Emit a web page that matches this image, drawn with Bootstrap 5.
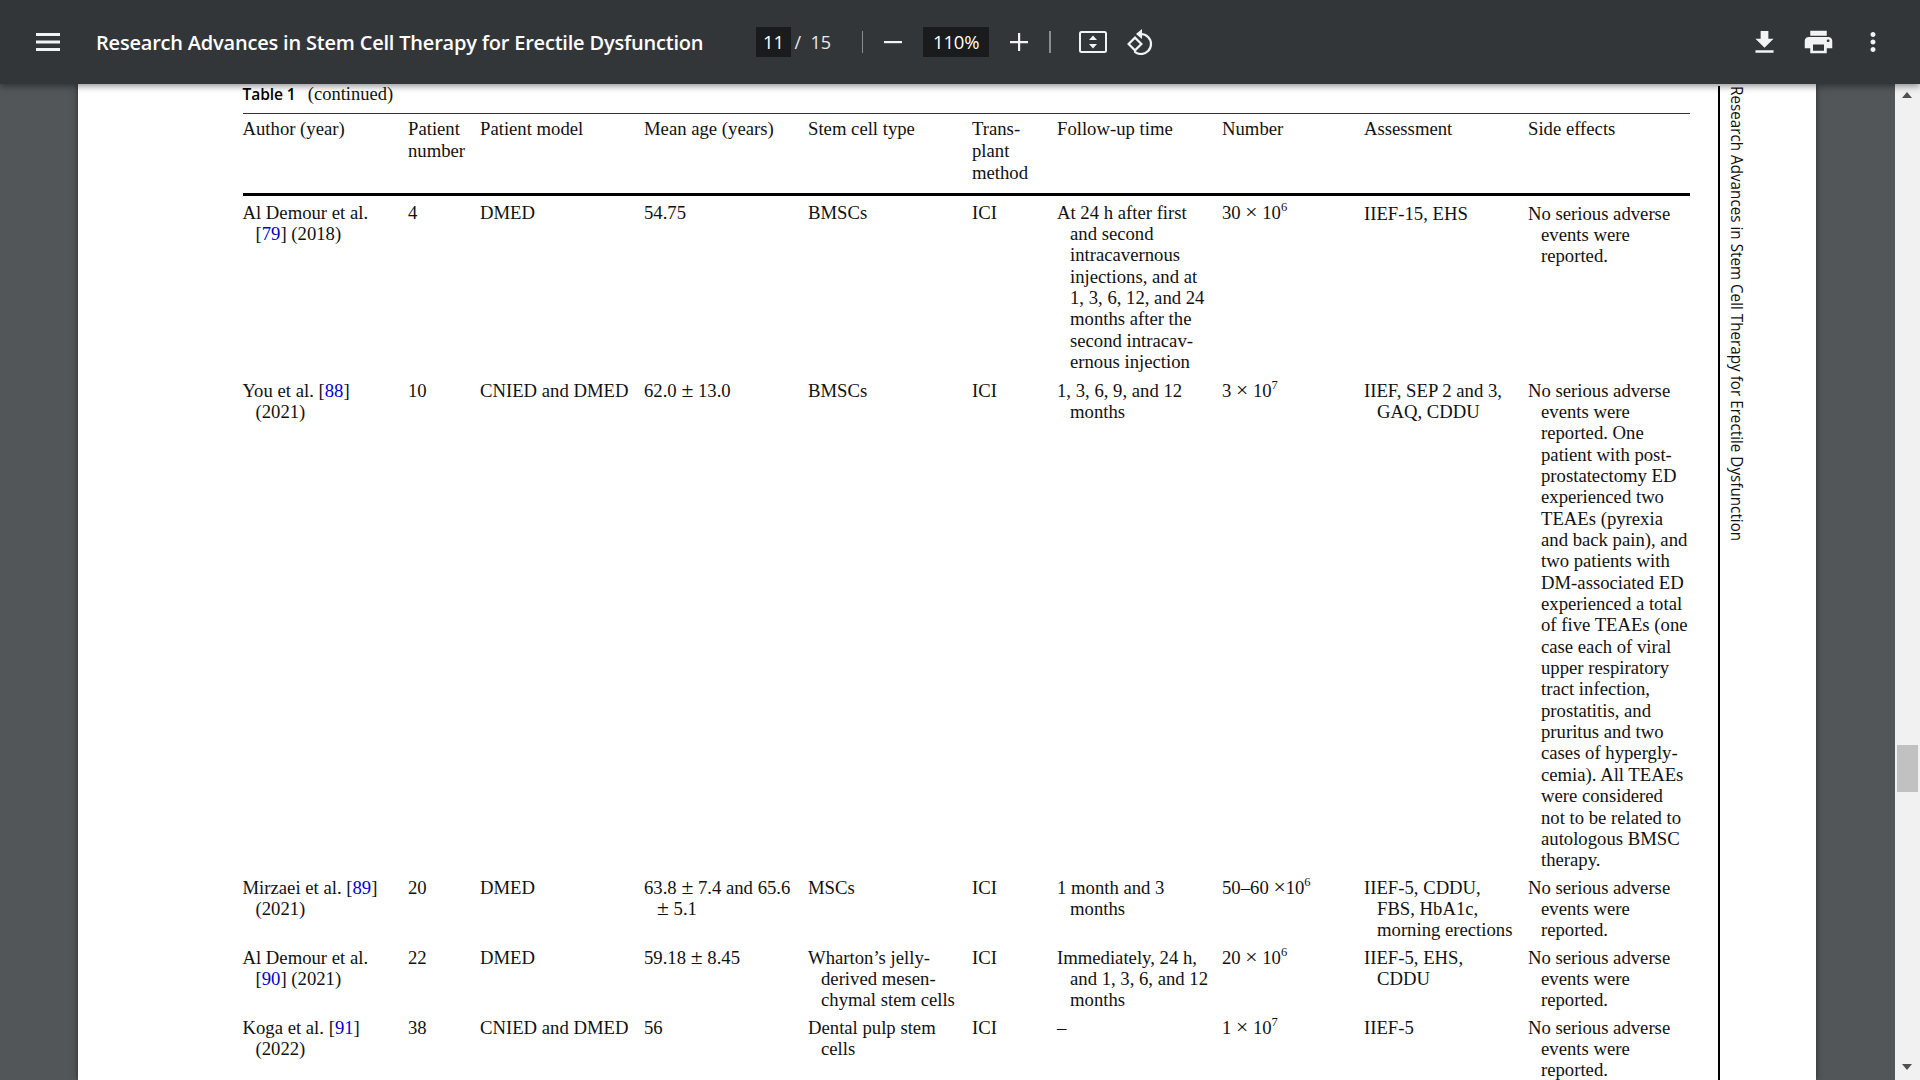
<!doctype html>
<html lang="en"><head><meta charset="utf-8"><title>PDF viewer</title>
<link rel="stylesheet" href="https://cdn.jsdelivr.net/npm/bootstrap@5.3.0/dist/css/bootstrap.min.css">
<style>
html,body{height:100%;overflow:hidden;background:#525659}
.shell{height:1080px}
.pdfbar{height:84px;background:#323639;color:#f1f3f4;position:relative;z-index:2;box-shadow:0 2px 7px rgba(0,0,0,.45);font-family:"Open Sans",sans-serif;flex:none}
.pdfbar svg{display:block;flex:none}
.menu-ico{margin-left:36px;width:24px;height:18px}
.doc-title{margin-left:36px;padding-top:2px;font-size:20px;font-weight:600;letter-spacing:-.2px;color:#fff;width:608px;white-space:nowrap}
.page-box{margin-left:52px;width:35px;height:30px;background:#191b1c;color:#fff;font-size:18.5px;line-height:30px;text-align:center}
.page-total{margin-left:3.5px;width:67.2px;font-size:18px;color:#e8eaed;white-space:nowrap}
.vsep{width:1.5px;height:22px;background:#8a8d90;flex:none}
.zoom-box{width:66px;height:30px;background:#191b1c;color:#fff;font-size:18.5px;letter-spacing:-.2px;line-height:30px;text-align:center}
.ml-a{margin-left:21px}.ml-b{margin-left:21px}.ml-c{margin-left:21px}.ml-d{margin-left:21px}.ml-e{margin-left:28px}.ml-f{margin-left:20px}
.right-tools{margin-left:auto;margin-right:32px}
.tool-print{margin-left:21.5px}.tool-more{margin-left:23.5px}
.viewer{min-height:0;background:#525659}
.sheet{margin-left:78px;width:1738px;background:#fff;box-shadow:0 0 6px rgba(0,0,0,.5);overflow:hidden;padding-left:164.5px}
.sheet-main{width:1447.5px;flex:none}
.tbl-cap{height:29px;font-family:"Liberation Serif",serif;font-size:18.5px;line-height:20px;color:#111}
.tbl-cap b{font-family:"Open Sans",sans-serif;font-size:15.6px;font-weight:600;margin-right:7.5px;letter-spacing:-.1px;color:#000}
.paper-table{table-layout:fixed;width:100%;border-collapse:collapse;font-family:"Liberation Serif",serif;font-size:18.7px;line-height:21.35px;color:#111}
.paper-table thead tr{border-top:1.5px solid #333;border-bottom:3px solid #000}
.paper-table th{font-weight:400;vertical-align:top;line-height:22px;padding:3.5px 0 9px}
.paper-table td{vertical-align:top;padding:5px 0 1px 13px;text-indent:-13px;white-space:nowrap}
.paper-table tbody tr.first td{padding-top:6.2px;padding-bottom:2.2px}
.paper-table sup{font-size:12.5px;top:-.6em;line-height:0;vertical-align:baseline;position:relative}
.mop{font-size:1.16em;line-height:0}
.ref{color:#0000d0}
.nudge{position:relative;top:1px}
.head-rule{margin-left:28px;margin-top:2px;border-left:2px solid #000;padding-left:8px;flex:none;width:90px;height:1000px}
.head-rule span{writing-mode:vertical-rl;font-family:"Open Sans",sans-serif;font-size:16.6px;line-height:19px;color:#111;white-space:nowrap;display:block;transform:scaleY(.918);transform-origin:top left}
.sbar{margin-left:auto;width:25px;background:#f1f1f1;position:relative;flex:none}
.sb-thumb{position:absolute;left:2px;right:2px;top:661px;height:47px;background:#c1c1c1}
.sb-up,.sb-down{position:absolute;left:7px;width:0;height:0;border-left:5.5px solid transparent;border-right:5.5px solid transparent}
.sb-up{top:8px;border-bottom:6px solid #505050}
.sb-down{bottom:10px;border-top:6px solid #505050}
</style></head>
<body>
<div class="shell d-flex flex-column">
  <div class="pdfbar d-flex align-items-center">
    <svg class="menu-ico" viewBox="0 0 24 18"><path fill="#f1f3f4" d="M0 0h24v3H0zM0 7.5h24v3H0zM0 15h24v3H0z"/></svg>
    <div class="doc-title">Research Advances in Stem Cell Therapy for Erectile Dysfunction</div>
    <div class="page-box">11</div>
    <div class="page-total">/&nbsp;&nbsp;15</div>
    <div class="vsep"></div>
    <svg class="ml-a" width="18" height="18" viewBox="0 0 18 18"><path fill="#f1f3f4" d="M0 8h18v2.2H0z"/></svg>
    <div class="zoom-box ml-b">110%</div>
    <svg class="ml-c" width="18" height="18" viewBox="0 0 18 18"><path fill="#f1f3f4" d="M0 8h8V0h2.2v8H18v2.2h-7.8V18H8v-7.8H0z"/></svg>
    <div class="vsep ml-d"></div>
    <svg class="ml-e" width="28" height="22" viewBox="0 0 28 22"><rect x="1" y="1" width="26" height="20" rx="1.5" fill="none" stroke="#f1f3f4" stroke-width="2"/><path fill="#f1f3f4" d="M14 4.5l4 4.5h-8zM14 17.5L10 13h8z"/></svg>
    <svg class="ml-f" width="26" height="26" viewBox="0 0 26 26"><path fill="none" stroke="#f1f3f4" stroke-width="2.2" d="M1.6 15L8 8.6l6.4 6.4L8 21.4z"/><path fill="none" stroke="#f1f3f4" stroke-width="2.2" stroke-linecap="round" d="M11 5h3a10 10 0 0 1 0 20c-2.6 0-4.6-.8-6-2"/><path fill="#f1f3f4" d="M15 0v10L9 5z"/></svg>
    <div class="right-tools d-flex align-items-center">
      <svg width="31" height="31" viewBox="0 0 24 24"><path fill="#f1f3f4" d="M19 9h-4V3H9v6H5l7 7 7-7zM5 18v2h14v-2H5z"/></svg>
      <svg class="tool-print" width="33" height="30" viewBox="0 0 24 24" preserveAspectRatio="none"><path fill="#f1f3f4" d="M19 8H5c-1.66 0-3 1.34-3 3v6h4v4h12v-4h4v-6c0-1.66-1.34-3-3-3zm-3 11H8v-5h8v5zm3-7c-.55 0-1-.45-1-1s.45-1 1-1 1 .45 1 1-.45 1-1 1zm-1-9H6v4h12V3z"/></svg>
      <svg class="tool-more" width="30" height="30" viewBox="0 0 24 24"><path fill="#f1f3f4" d="M12 8c1.1 0 2-.9 2-2s-.9-2-2-2-2 .9-2 2 .9 2 2 2zm0 2c-1.1 0-2 .9-2 2s.9 2 2 2 2-.9 2-2-.9-2-2-2zm0 6c-1.1 0-2 .9-2 2s.9 2 2 2 2-.9 2-2-.9-2-2-2z"/></svg>
    </div>
  </div>
  <div class="viewer d-flex flex-grow-1 overflow-hidden">
    <div class="sheet d-flex">
      <div class="sheet-main">
        <div class="tbl-cap"><b>Table 1</b> (continued)</div>
        <table class="paper-table">
          <colgroup><col style="width:165.5px"><col style="width:72px"><col style="width:164px"><col style="width:164px"><col style="width:164px"><col style="width:85px"><col style="width:165px"><col style="width:142px"><col style="width:164px"><col></colgroup>
          <thead><tr>
            <th>Author (year)</th><th>Patient<br>number</th><th>Patient model</th><th>Mean age (years)</th><th>Stem cell type</th><th>Trans-<br>plant<br>method</th><th>Follow-up time</th><th>Number</th><th>Assessment</th><th>Side effects</th>
          </tr></thead>
          <tbody>
          <tr class="first">
            <td>Al Demour et al.<br>[<span class="ref">79</span>] (2018)</td><td>4</td><td>DMED</td><td>54.75</td><td>BMSCs</td><td>ICI</td>
            <td>At 24 h after first<br>and second<br>intracavernous<br>injections, and at<br>1, 3, 6, 12, and 24<br>months after the<br>second intracav-<br>ernous injection</td>
            <td>30 <span class="mop">×</span> 10<sup>6</sup></td><td><div class="nudge">IIEF-15, EHS</div></td><td><div class="nudge">No serious adverse<br>events were<br>reported.</div></td>
          </tr>
          <tr>
            <td>You et al. [<span class="ref">88</span>]<br>(2021)</td><td>10</td><td>CNIED and DMED</td><td>62.0 <span class="mop">±</span> 13.0</td><td>BMSCs</td><td>ICI</td>
            <td>1, 3, 6, 9, and 12<br>months</td><td>3 <span class="mop">×</span> 10<sup>7</sup></td><td>IIEF, SEP 2 and 3,<br>GAQ, CDDU</td>
            <td>No serious adverse<br>events were<br>reported. One<br>patient with post-<br>prostatectomy ED<br>experienced two<br>TEAEs (pyrexia<br>and back pain), and<br>two patients with<br>DM-associated ED<br>experienced a total<br>of five TEAEs (one<br>case each of viral<br>upper respiratory<br>tract infection,<br>prostatitis, and<br>pruritus and two<br>cases of hypergly-<br>cemia). All TEAEs<br>were considered<br>not to be related to<br>autologous BMSC<br>therapy.</td>
          </tr>
          <tr>
            <td>Mirzaei et al. [<span class="ref">89</span>]<br>(2021)</td><td>20</td><td>DMED</td><td>63.8 <span class="mop">±</span> 7.4 and 65.6<br><span class="mop">±</span> 5.1</td><td>MSCs</td><td>ICI</td>
            <td>1 month and 3<br>months</td><td>50–60 <span class="mop">×</span>10<sup>6</sup></td><td>IIEF-5, CDDU,<br>FBS, HbA1c,<br>morning erections</td><td>No serious adverse<br>events were<br>reported.</td>
          </tr>
          <tr>
            <td>Al Demour et al.<br>[<span class="ref">90</span>] (2021)</td><td>22</td><td>DMED</td><td>59.18 <span class="mop">±</span> 8.45</td><td>Wharton’s jelly-<br>derived mesen-<br>chymal stem cells</td><td>ICI</td>
            <td>Immediately, 24 h,<br>and 1, 3, 6, and 12<br>months</td><td>20 <span class="mop">×</span> 10<sup>6</sup></td><td>IIEF-5, EHS,<br>CDDU</td><td>No serious adverse<br>events were<br>reported.</td>
          </tr>
          <tr>
            <td>Koga et al. [<span class="ref">91</span>]<br>(2022)</td><td>38</td><td>CNIED and DMED</td><td>56</td><td>Dental pulp stem<br>cells</td><td>ICI</td>
            <td>–</td><td>1 <span class="mop">×</span> 10<sup>7</sup></td><td>IIEF-5</td><td>No serious adverse<br>events were<br>reported.</td>
          </tr>
          </tbody>
        </table>
      </div>
      <div class="head-rule"><span>Research Advances in Stem Cell Therapy for Erectile Dysfunction</span></div>
    </div>
    <div class="sbar"><div class="sb-up"></div><div class="sb-thumb"></div><div class="sb-down"></div></div>
  </div>
</div>
<script src="https://cdn.jsdelivr.net/npm/bootstrap@5.3.0/dist/js/bootstrap.bundle.min.js"></script>
</body></html>
